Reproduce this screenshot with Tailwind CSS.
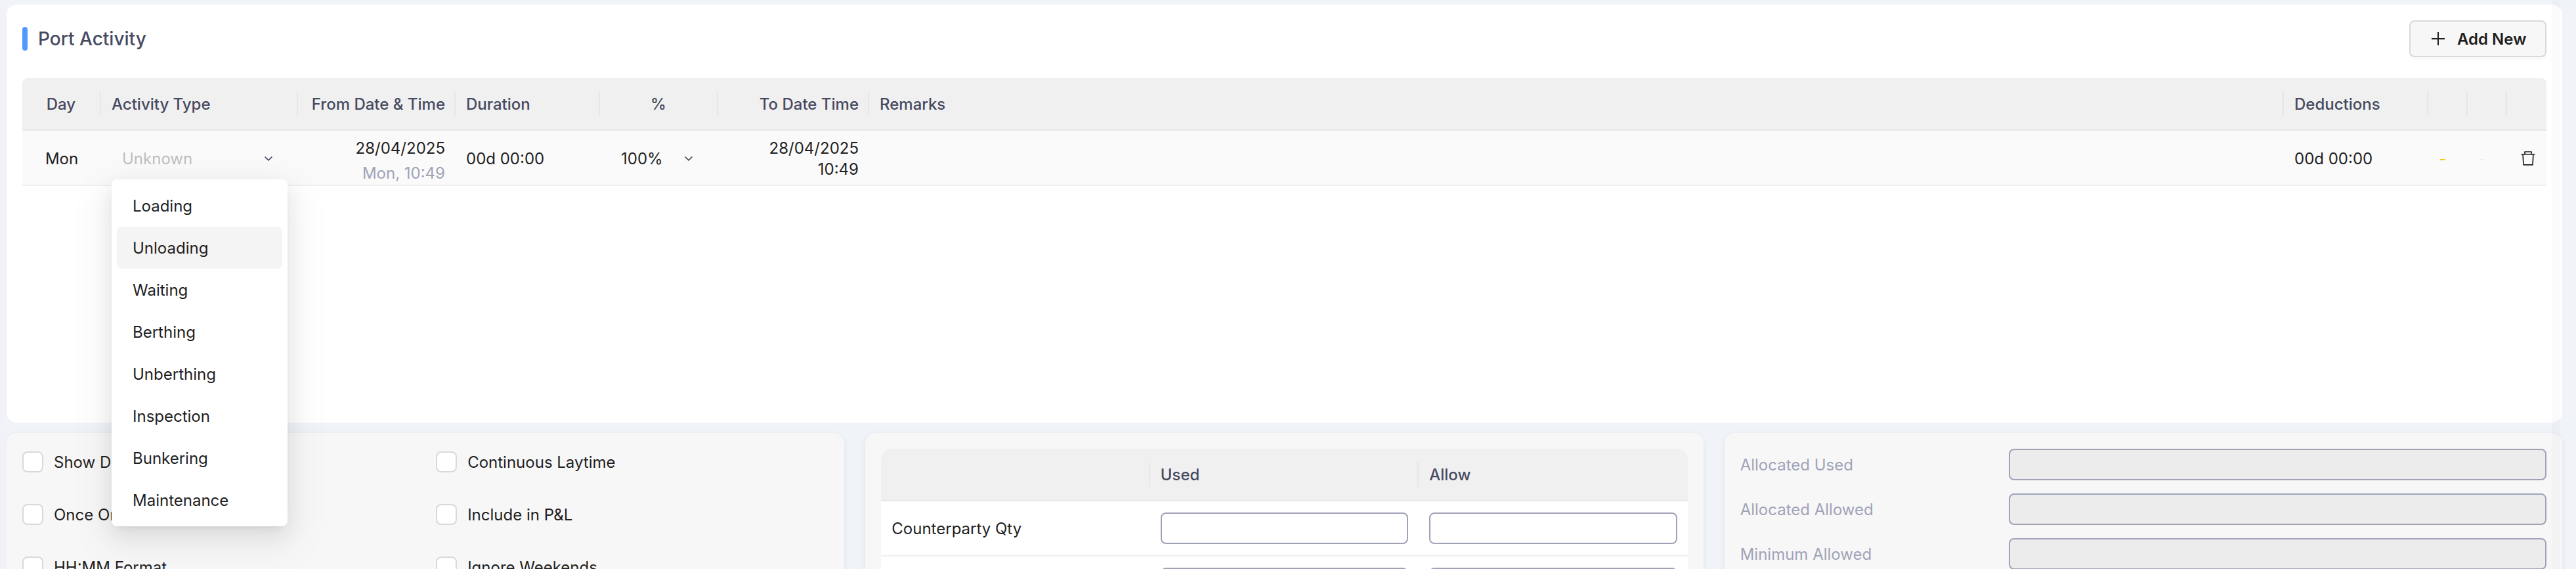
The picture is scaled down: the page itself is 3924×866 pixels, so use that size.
<!DOCTYPE html>
<html lang="en">
<head>
<meta charset="utf-8">
<title>Port Activity</title>
<script src="https://cdn.jsdelivr.net/npm/@tailwindcss/browser@4"></script>
</head>
<body class="relative h-[866px] w-[3924px] overflow-hidden bg-[#f0f4f8] font-['Inter',sans-serif] text-[24px] text-[#1f1f1f]">
<div class="h-full w-[3919px] overflow-hidden border-l-[10px] border-[#f1f2f7] bg-[#f0f4f8] pt-[7px] pr-4">
  <section class="h-[636px] rounded-2xl bg-white px-6 pt-6">
    <header class="flex h-14 items-center">
      <span class="h-9 w-2 rounded-sm bg-[#5297ff]"></span>
      <h1 class="ml-4 text-[28px] font-medium text-[#464a5f]">Port Activity</h1>
      <button class="ml-auto flex h-14 w-[209px] items-center rounded-lg border-2 border-[#d9d9d9] bg-[#f7f7f7] pl-8 text-[24px] font-semibold shadow-[0_4px_0_rgba(0,0,0,0.02)]">
        <svg class="size-5" viewBox="0 0 20 20" stroke="#1f1f1f" stroke-width="2"><path d="M10 0V20M0 10H20"/></svg>
        <span class="ml-[19px] pt-0.5">Add New</span>
      </button>
    </header>
    <div class="mt-8 overflow-hidden rounded-t-lg">
      <div class="grid h-20 grid-cols-[120px_300px_240px_220px_180px_230px_1fr_220px_60px_60px_60px] items-center border-b-2 border-[#e8e8e8] bg-[#f0f0f0] font-medium text-[#464a5f]">
        <div class="flex h-[38px] items-center justify-center border-r-2 border-[#e6e6e6] pt-0.5">Day</div>
        <div class="flex h-[38px] items-center border-r-2 border-[#e6e6e6] pt-0.5 pl-4">Activity Type</div>
        <div class="flex h-[38px] items-center justify-end border-r-2 border-[#e6e6e6] pt-0.5 pr-[14px]">From Date &amp; Time</div>
        <div class="flex h-[38px] items-center border-r-2 border-[#e6e6e6] pt-0.5 pl-4">Duration</div>
        <div class="flex h-[38px] items-center justify-center border-r-2 border-[#e6e6e6] pt-0.5">%</div>
        <div class="flex h-[38px] items-center justify-end border-r-2 border-[#e6e6e6] pt-0.5 pr-[14px]">To Date Time</div>
        <div class="flex h-[38px] items-center border-r-2 border-[#e6e6e6] pt-0.5 pl-4">Remarks</div>
        <div class="flex h-[38px] items-center border-r-2 border-[#e6e6e6] pt-0.5 pl-4">Deductions</div>
        <div class="h-[38px] border-r-2 border-[#e6e6e6]"></div>
        <div class="h-[38px] border-r-2 border-[#e6e6e6]"></div>
        <div></div>
      </div>
      <div class="grid h-[84px] grid-cols-[120px_300px_240px_220px_180px_230px_1fr_220px_60px_60px_60px] items-center border-b-2 border-[#f0f0f0] bg-[#fafafa]">
        <div class="pt-0.5 text-center">Mon</div>
        <div class="flex items-center pl-8"><span class="pt-0.5 text-[#bfbfbf]">Unknown</span>
          <svg class="mr-[39px] ml-auto h-3 w-3" viewBox="0 0 12 12" fill="none" stroke="#464a5f" stroke-width="1.6"><path d="M0.6 3.6L6 8.8L11.4 3.6"/></svg></div>
        <div class="pt-2 pr-4 text-right leading-[38px]"><div>28/04/2025</div><div class="text-[#a0a3b8]">Mon, 10:49</div></div>
        <div class="pt-0.5 pl-4">00d 00:00</div>
        <div class="flex items-center pl-8"><span class="pt-0.5">100%</span>
          <svg class="mr-[39px] ml-auto h-3 w-3" viewBox="0 0 12 12" fill="none" stroke="#464a5f" stroke-width="1.6"><path d="M0.6 3.6L6 8.8L11.4 3.6"/></svg></div>
        <div class="pt-0.5 pr-4 text-right leading-8"><div>28/04/2025</div><div>10:49</div></div>
        <div></div>
        <div class="pt-0.5 pl-4">00d 00:00</div>
        <div class="pt-1 pl-[18px]"><div class="h-0.5 w-2 bg-[#fdc61a]"></div></div>
        <div class="pt-1 pl-[18px]"><div class="h-0.5 w-2 bg-[#f0f0f0]"></div></div>
        <div class="flex justify-center pl-1"><svg class="size-[22px]" viewBox="0 0 22 22" fill="none" stroke="#1f1f1f" stroke-width="1.7"><path d="M0.5 5H21.5M6 5V1H16V5M3.1 5L4 20.8H18L18.9 5" stroke-linejoin="round"/></svg></div>
      </div>
    </div>
  </section>
  <div class="mt-4 grid h-[240px] grid-cols-3 gap-8">
    <section class="grid grid-cols-2 content-start gap-x-8 gap-y-12 rounded-2xl bg-[#f7f7f7] px-6 pt-7 shadow-[0_2px_8px_rgba(0,0,0,0.08)]">
      <label class="flex h-8 items-center gap-4"><span class="size-8 rounded-lg border-2 border-[#d9d9d9] bg-white"></span><span class="pt-0.5">Show Deductions</span></label>
      <label class="flex h-8 items-center gap-4"><span class="size-8 rounded-lg border-2 border-[#d9d9d9] bg-white"></span><span class="pt-0.5">Continuous Laytime</span></label>
      <label class="flex h-8 items-center gap-4"><span class="size-8 rounded-lg border-2 border-[#d9d9d9] bg-white"></span><span class="pt-0.5">Once On Demurrage</span></label>
      <label class="flex h-8 items-center gap-4"><span class="size-8 rounded-lg border-2 border-[#d9d9d9] bg-white"></span><span class="pt-0.5">Include in P&amp;L</span></label>
      <label class="flex h-8 items-center gap-4"><span class="size-8 rounded-lg border-2 border-[#d9d9d9] bg-white"></span><span class="pt-0.5">HH:MM Format</span></label>
      <label class="flex h-8 items-center gap-4"><span class="size-8 rounded-lg border-2 border-[#d9d9d9] bg-white"></span><span class="pt-0.5">Ignore Weekends</span></label>
    </section>
    <section class="rounded-2xl bg-[#f7f7f7] px-6 pt-6 shadow-[0_2px_8px_rgba(0,0,0,0.08)]">
      <div class="overflow-hidden rounded-t-2xl bg-white">
        <div class="grid h-20 grid-cols-3 items-center border-b-2 border-[#e8e8e8] bg-[#f0f0f0] font-medium text-[#464a5f]">
          <div class="h-[38px] border-r-2 border-[#e6e6e6]"></div>
          <div class="flex h-[38px] items-center border-r-2 border-[#e6e6e6] pt-0.5 pl-4">Used</div>
          <div class="pt-0.5 pl-4">Allow</div>
        </div>
        <div class="grid h-[84px] grid-cols-3 items-center border-b-2 border-[#f0f0f0]">
          <div class="pt-0.5 pl-4">Counterparty Qty</div>
          <div class="px-4"><div class="h-12 rounded-lg border-2 border-[#a0a3b8] bg-white"></div></div>
          <div class="px-4"><div class="h-12 rounded-lg border-2 border-[#a0a3b8] bg-white"></div></div>
        </div>
        <div class="grid h-[84px] grid-cols-3 items-center border-b-2 border-[#f0f0f0]">
          <div></div>
          <div class="px-4"><div class="h-12 rounded-lg border-2 border-[#a0a3b8] bg-white"></div></div>
          <div class="px-4"><div class="h-12 rounded-lg border-2 border-[#a0a3b8] bg-white"></div></div>
        </div>
      </div>
    </section>
    <section class="flex flex-col gap-5 rounded-2xl bg-[#f7f7f7] px-6 pt-6 text-[#a0a3b8] shadow-[0_2px_8px_rgba(0,0,0,0.08)]">
      <div class="grid h-12 shrink-0 grid-cols-3 items-center"><span class="pt-0.5">Allocated Used</span><div class="col-span-2 h-12 rounded-lg border-2 border-[#a0a3b8] bg-[#ececec]"></div></div>
      <div class="grid h-12 shrink-0 grid-cols-3 items-center"><span class="pt-0.5">Allocated Allowed</span><div class="col-span-2 h-12 rounded-lg border-2 border-[#a0a3b8] bg-[#ececec]"></div></div>
      <div class="grid h-12 shrink-0 grid-cols-3 items-center"><span class="pt-0.5">Minimum Allowed</span><div class="col-span-2 h-12 rounded-lg border-2 border-[#a0a3b8] bg-[#ececec]"></div></div>
    </section>
  </div>
</div>
<!-- activity type menu -->
<ul class="absolute top-[273px] left-[170px] w-[268px] rounded-lg bg-white p-2 shadow-[0_12px_32px_rgba(0,0,0,0.08),0_6px_12px_-8px_rgba(0,0,0,0.12),0_18px_56px_16px_rgba(0,0,0,0.05)]">
  <li class="flex h-16 items-center rounded-lg px-6 pt-0.5">Loading</li>
  <li class="flex h-16 items-center rounded-lg bg-[#f4f4f4] px-6 pt-0.5">Unloading</li>
  <li class="flex h-16 items-center rounded-lg px-6 pt-0.5">Waiting</li>
  <li class="flex h-16 items-center rounded-lg px-6 pt-0.5">Berthing</li>
  <li class="flex h-16 items-center rounded-lg px-6 pt-0.5">Unberthing</li>
  <li class="flex h-16 items-center rounded-lg px-6 pt-0.5">Inspection</li>
  <li class="flex h-16 items-center rounded-lg px-6 pt-0.5">Bunkering</li>
  <li class="flex h-16 items-center rounded-lg px-6 pt-0.5">Maintenance</li>
</ul>
<!-- overlay scrollbar -->
<div class="absolute top-0 left-[3887px] h-full w-3 bg-black/[0.018]"></div>
</body>
</html>
